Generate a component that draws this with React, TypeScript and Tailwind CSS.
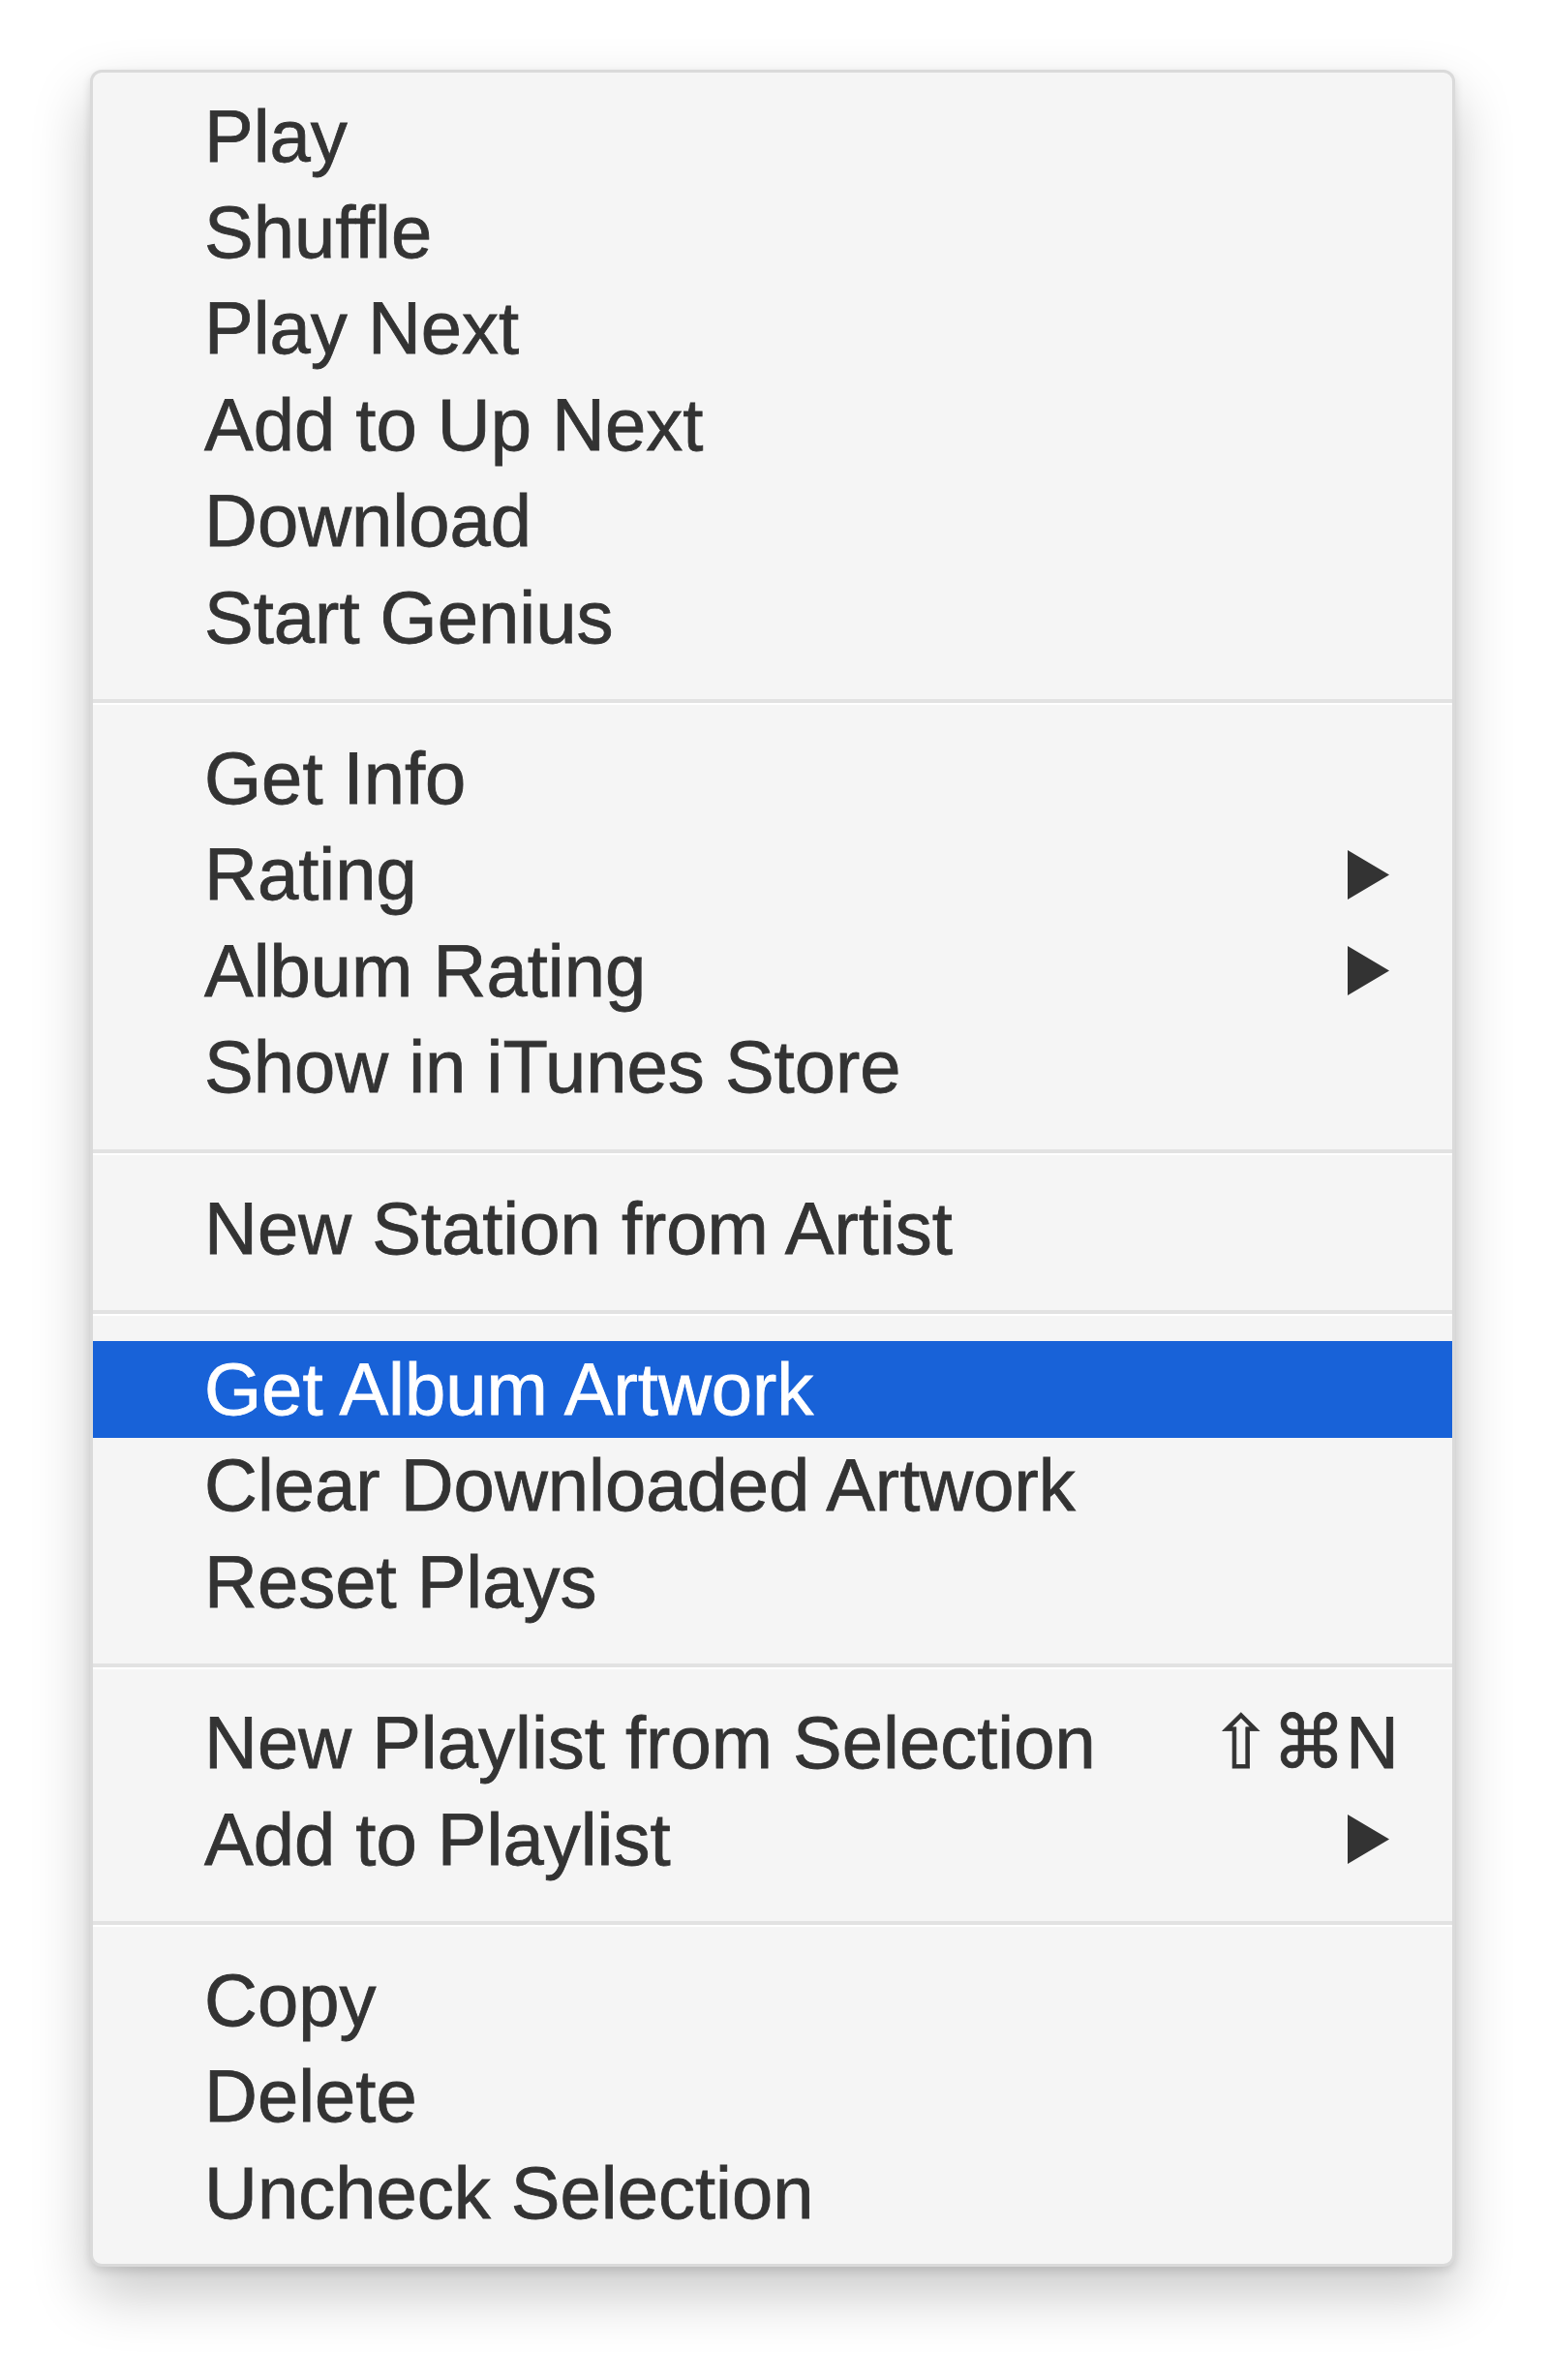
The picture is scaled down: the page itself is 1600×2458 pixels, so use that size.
type Item = {
  label: string;
  submenu?: boolean;
  shortcut?: string;
  active?: boolean;
};

const groups: Item[][] = [
  [
    { label: 'Play' },
    { label: 'Shuffle' },
    { label: 'Play Next' },
    { label: 'Add to Up Next' },
    { label: 'Download' },
    { label: 'Start Genius' },
  ],
  [
    { label: 'Get Info' },
    { label: 'Rating', submenu: true },
    { label: 'Album Rating', submenu: true },
    { label: 'Show in iTunes Store' },
  ],
  [{ label: 'New Station from Artist' }],
  [
    { label: 'Get Album Artwork', active: true },
    { label: 'Clear Downloaded Artwork' },
    { label: 'Reset Plays' },
  ],
  [
    { label: 'New Playlist from Selection', shortcut: '⇧⌘N' },
    { label: 'Add to Playlist', submenu: true },
  ],
  [{ label: 'Copy' }, { label: 'Delete' }, { label: 'Uncheck Selection' }],
];

function SubmenuArrow() {
  return (
    <svg width="47" height="55" viewBox="0 0 47 55" className="shrink-0">
      <path d="M2 2 L45 27.5 L2 53 Z" fill="#333333" />
    </svg>
  );
}

function MenuRow({ item }: { item: Item }) {
  return (
    <div
      className={
        item.active
          ? 'h-[99.4px] flex items-center justify-between pl-[115px] pr-[63px] bg-[#1862d8] text-white [-webkit-text-stroke:0.8px_#ffffff]'
          : 'h-[99.4px] flex items-center justify-between pl-[115px] pr-[63px] text-[#333333] [-webkit-text-stroke:0.8px_#333333]'
      }
    >
      <span className="leading-none whitespace-nowrap">{item.label}</span>
      {item.submenu && <SubmenuArrow />}
      {item.shortcut && (
        <span className="leading-none whitespace-nowrap mr-[-8px]">{item.shortcut}</span>
      )}
    </div>
  );
}

export default function App() {
  return (
    <main className="min-h-screen w-[1600px] h-[2458px] bg-white pt-[72px] pl-[93px]">
      <div
        className="w-[1410px] rounded-[12px] bg-[#f5f5f5] border-[3px] border-[#dadada] pt-[16px] pb-[24px] shadow-[0_28px_60px_rgba(0,0,0,0.22),0_4px_10px_rgba(0,0,0,0.12)] overflow-hidden"
        style={{ fontFamily: '"Liberation Sans", Arial, Helvetica, sans-serif', fontSize: 76 }}
      >
        {groups.map((group, gi) => (
          <div key={gi}>
            {gi > 0 && (
              <div className="h-[67px] flex flex-col pt-[35px]">
                <div className="h-[4px] bg-[#e2e2e2]" />
                <div className="h-[2px] bg-white" />
              </div>
            )}
            {group.map((item) => (
              <MenuRow key={item.label} item={item} />
            ))}
          </div>
        ))}
      </div>
    </main>
  );
}
